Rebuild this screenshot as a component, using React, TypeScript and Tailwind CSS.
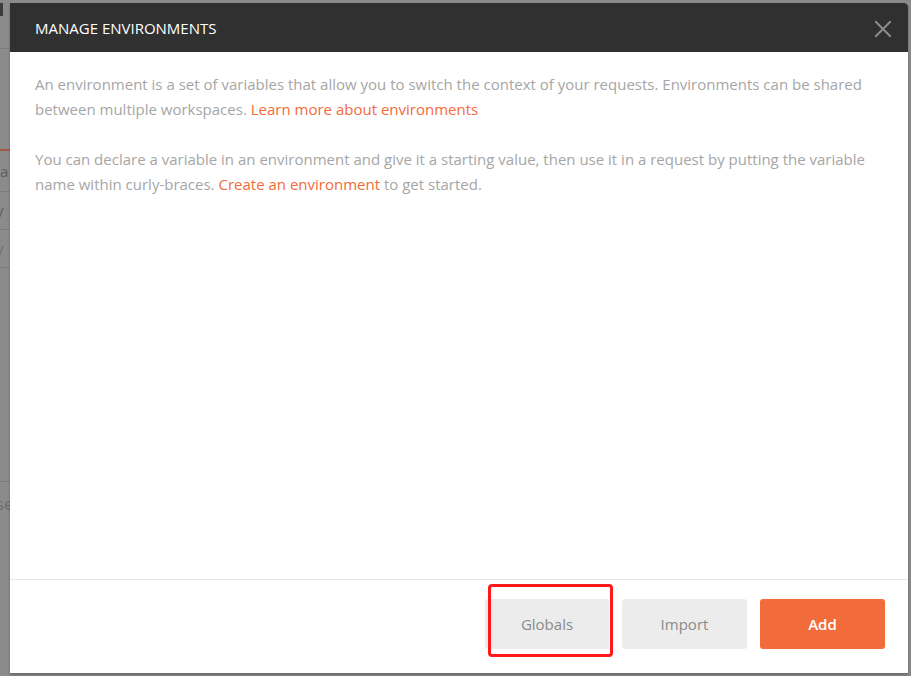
import React from "react";

export default function App() {
  const font = { fontFamily: '"Open Sans", "Noto Sans", sans-serif' };
  return (
    <div className="relative w-[911px] h-[676px] overflow-hidden bg-[#8b8b8b]" style={font}>
      {/* underlying app (dimmed) */}
      <div className="flex flex-col w-[60px] text-[#5e5e5e] text-[15px]">
        <div className="h-[48px] flex items-start pt-[3px] gap-[6px]">
          <div className="w-[3px] h-[13px] bg-[#3c3c3c]" />
        </div>
        <div className="h-px bg-[#7b7b7b]" />
        <div className="h-[100px]" />
        <div className="h-[2px] bg-[#a25a40]" />
        <div className="h-[41px] flex items-center pl-0 border-b border-[#7b7b7b]">a</div>
        <div className="h-[38px] flex items-center -ml-[4px] border-b border-[#7b7b7b]">y</div>
        <div className="h-[38px] flex items-center -ml-[4px] border-b border-[#7b7b7b] text-[#6e6e6e]">y</div>
        <div className="h-[214px] border-b border-[#7b7b7b]" />
        <div className="h-[44px] flex items-center -ml-[4px] text-[#6e6e6e] text-[17px]">se</div>
      </div>

      {/* modal */}
      <div className="absolute left-[10px] top-[3px] w-[898px] h-[670px] bg-white rounded-tr-[4px] shadow-[0_2px_3px_rgba(0,0,0,0.25)] flex flex-col">
        <div className="h-[49px] bg-[#303030] rounded-tr-[4px] flex items-center justify-between pl-[25px] pr-[16px]">
          <span className="text-white text-[15px] tracking-[0px] mt-[2px]">MANAGE ENVIRONMENTS</span>
          <svg width="18" height="18" viewBox="0 0 18 18" className="mt-[2px]">
            <path d="M2 2 L16 16 M16 2 L2 16" stroke="#8c8c8c" strokeWidth="2" strokeLinecap="square" />
          </svg>
        </div>
        <div className="flex-1 px-[25px] pt-[20px] text-[15px] leading-[25px] text-[#a6a6a6]">
          <p>
            An environment is a set of variables that allow you to switch the context of your requests. Environments can be shared between multiple workspaces.{" "}
            <span className="text-[#f26b3a]">Learn more about environments</span>
          </p>
          <p className="mt-[25px]">
            You can declare a variable in an environment and give it a starting value, then use it in a request by putting the variable name within curly-braces.{" "}
            <span className="text-[#f26b3a]">Create an environment</span> to get started.
          </p>
        </div>
        <div className="h-[94px] border-t border-[#e8e8e8] flex justify-end items-start pt-[19px] pr-[23px] gap-[13px]">
          <div className="relative">
            <button className="w-[124px] h-[50px] rounded-[3px] bg-[#ececec] text-[#8a8a8a] text-[15px]">Globals</button>
            <div className="absolute left-[3px] top-[-15px] w-[125px] h-[73px] border-[3px] border-[#ff1a1a] rounded-[4px] pointer-events-none" />
          </div>
          <button className="w-[125px] h-[50px] rounded-[3px] bg-[#ececec] text-[#8a8a8a] text-[15px]">Import</button>
          <button className="w-[125px] h-[50px] rounded-[3px] bg-[#f26b3a] text-white text-[15px] font-semibold">Add</button>
        </div>
      </div>
    </div>
  );
}
